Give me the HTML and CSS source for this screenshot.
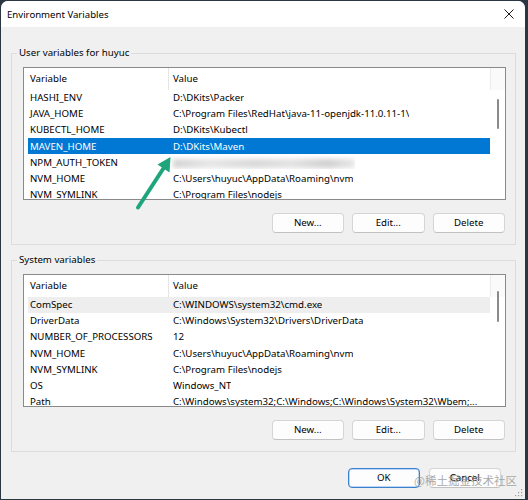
FILE: index.html
```html
<!DOCTYPE html>
<html lang="en">
<head>
<meta charset="utf-8">
<title>Environment Variables</title>
<link rel="stylesheet" href="styles.css">
</head>
<body>
<div class="window">
  <div class="titlebar">
    <span class="title">Environment Variables</span>
    <svg class="close" width="10" height="10" viewBox="0 0 10 10"><path d="M0.5 0.5 L9.5 9.5 M9.5 0.5 L0.5 9.5" stroke="#1a1a1a" stroke-width="1" fill="none"/></svg>
  </div>
  <div class="content">
    <fieldset class="group">
      <legend>User variables for huyuc</legend>
      <div class="list">
        <div class="list-main">
          <div class="head"><span class="c1">Variable</span><span class="c2">Value</span></div>
          <div class="rows">
            <div class="row"><span class="c1">HASHI_ENV</span><span class="c2">D:\DKits\Packer</span></div>
            <div class="row"><span class="c1">JAVA_HOME</span><span class="c2">C:\Program Files\RedHat\java-11-openjdk-11.0.11-1\</span></div>
            <div class="row"><span class="c1">KUBECTL_HOME</span><span class="c2">D:\DKits\Kubectl</span></div>
            <div class="row selected"><span class="c1">MAVEN_HOME</span><span class="c2">D:\DKits\Maven</span></div>
            <div class="row"><span class="c1">NPM_AUTH_TOKEN</span><span class="c2"><span class="blur"></span></span></div>
            <div class="row"><span class="c1">NVM_HOME</span><span class="c2">C:\Users\huyuc\AppData\Roaming\nvm</span></div>
            <div class="row"><span class="c1">NVM_SYMLINK</span><span class="c2">C:\Program Files\nodejs</span></div>
          </div>
        </div>
        <div class="scroll"><div class="scroll-head"></div><div class="thumb user-thumb"></div></div>
      </div>
      <div class="buttons">
        <button class="btn">New...</button>
        <button class="btn">Edit...</button>
        <button class="btn">Delete</button>
      </div>
    </fieldset>

    <fieldset class="group group2">
      <legend>System variables</legend>
      <div class="list">
        <div class="list-main">
          <div class="head"><span class="c1">Variable</span><span class="c2">Value</span></div>
          <div class="rows">
            <div class="row focused"><span class="c1">ComSpec</span><span class="c2">C:\WINDOWS\system32\cmd.exe</span></div>
            <div class="row"><span class="c1">DriverData</span><span class="c2">C:\Windows\System32\Drivers\DriverData</span></div>
            <div class="row"><span class="c1">NUMBER_OF_PROCESSORS</span><span class="c2">12</span></div>
            <div class="row"><span class="c1">NVM_HOME</span><span class="c2">C:\Users\huyuc\AppData\Roaming\nvm</span></div>
            <div class="row"><span class="c1">NVM_SYMLINK</span><span class="c2">C:\Program Files\nodejs</span></div>
            <div class="row"><span class="c1">OS</span><span class="c2">Windows_NT</span></div>
            <div class="row"><span class="c1">Path</span><span class="c2">C:\Windows\system32;C:\Windows;C:\Windows\System32\Wbem;...</span></div>
          </div>
        </div>
        <div class="scroll"><div class="scroll-head"></div><div class="thumb sys-thumb"></div></div>
      </div>
      <div class="buttons">
        <button class="btn">New...</button>
        <button class="btn">Edit...</button>
        <button class="btn">Delete</button>
      </div>
    </fieldset>

    <div class="footer">
      <button class="btn ok">OK</button>
      <button class="btn">Cancel</button>
    </div>
  </div>
  <svg class="grip" width="8" height="8" viewBox="0 0 8 8">
    <rect x="6" y="0" width="1.2" height="1.2" fill="#9a9a9a"/>
    <rect x="3" y="3" width="1.2" height="1.2" fill="#9a9a9a"/>
    <rect x="6" y="3" width="1.2" height="1.2" fill="#9a9a9a"/>
    <rect x="0" y="6" width="1.2" height="1.2" fill="#9a9a9a"/>
    <rect x="3" y="6" width="1.2" height="1.2" fill="#9a9a9a"/>
    <rect x="6" y="6" width="1.2" height="1.2" fill="#9a9a9a"/>
  </svg>
</div>

<svg class="arrow" width="528" height="500" viewBox="0 0 528 500">
  <line x1="138" y1="207.5" x2="164" y2="167.5" stroke="#1fa57c" stroke-width="4" stroke-linecap="round"/>
  <polygon points="170.5,157 157.5,164.5 169.5,172.5" fill="#1fa57c"/>
</svg>

<div class="watermark">@稀土掘金技术社区</div>
</body>
</html>
```

FILE: styles.css
```css
* { box-sizing: border-box; }

html, body {
  margin: 0;
  padding: 0;
}

body {
  width: 528px;
  height: 500px;
  background: #2a3642;
  font-family: "Noto Sans", "Liberation Sans", sans-serif;
  font-size: 9.7px;
  color: #000000;
  overflow: hidden;
}

.window {
  position: relative;
  margin: 1px 3px 0 1px;
  width: 524px;
  height: 498px;
  background: #f0f0f0;
  border-radius: 7px 7px 0 0;
  overflow: hidden;
}

.titlebar {
  height: 26px;
  background: #ffffff;
  display: flex;
  align-items: center;
  justify-content: space-between;
  padding: 0 11px 0 6px;
}

.title {
  font-size: 9.6px;
  color: #000000;
}

.close { display: block; }

.content {
  padding: 18px 9px 0 10px;
}

.group {
  margin: 0;
  min-width: 0;
  min-inline-size: 0;
  padding: 6px 9px 11px 11px;
  border: 1px solid #dcdcdc;
  border-radius: 0;
}

.group2 { margin-top: 7px; }

.group legend {
  margin-left: -6px;
  padding: 0 2px;
  line-height: 16px;
  height: 16px;
  font-size: 9.7px;
  color: #000000;
}

.list {
  display: flex;
  height: 133px;
  border: 1px solid #8a8a8a;
  background: #ffffff;
  overflow: hidden;
}

.list-main {
  flex: 1;
  min-width: 0;
  overflow: hidden;
}

.head {
  display: flex;
  height: 21.5px;
  align-items: center;
}

.head .c1 {
  width: 145px;
  padding-left: 6px;
  border-right: 1px solid #e5e5e5;
  height: 100%;
  display: flex;
  align-items: center;
}

.head .c2 {
  padding-left: 4px;
}

.rows {
  padding-left: 4px;
}

.row {
  display: flex;
  height: 16.2px;
  align-items: center;
  white-space: nowrap;
}

.row .c1 {
  width: 141px;
  flex: none;
  padding-left: 2px;
}

.row .c2 {
  padding-left: 4px;
  min-width: 0;
  overflow: hidden;
}

.row.selected {
  background: #0078d4;
  color: #ffffff;
}

.row.focused {
  background: #eeeeee;
}

.blur {
  display: inline-block;
  width: 182px;
  height: 9px;
  vertical-align: middle;
  background: linear-gradient(90deg, #d2d2d2 0%, #e6e6e6 20%, #d8d8d8 45%, #e2e2e2 65%, #cfcfcf 85%, #e8e8e8 100%);
  filter: blur(2.5px);
}

.scroll {
  width: 15px;
  flex: none;
  display: flex;
  flex-direction: column;
  align-items: center;
}

.scroll-head {
  width: 100%;
  height: 21.5px;
  border-left: 1px solid #ececec;
  background: #fafafa;
}

.thumb {
  width: 2px;
  background: #8a8a8a;
  border-radius: 1px;
  margin-left: 1px;
}

.user-thumb { margin-top: 9px; height: 30px; }
.sys-thumb { margin-top: -6px; height: 31px; }

.buttons {
  display: flex;
  justify-content: flex-end;
  gap: 8px;
  margin-top: 13px;
  padding-right: 1px;
}

.btn {
  width: 72.5px;
  height: 20px;
  padding: 0;
  margin: 0;
  font-family: inherit;
  font-size: 9.7px;
  color: #000000;
  background: #fdfdfd;
  border: 1px solid #d5d5d5;
  border-bottom-color: #c2c2c2;
  border-radius: 4px;
  line-height: 18px;
}

.footer {
  display: flex;
  justify-content: flex-end;
  gap: 8.5px;
  margin-top: 16px;
  padding-right: 15px;
}

.btn.ok {
  border: 1px solid #3b7fcf;
  box-shadow: inset 0 0 0 0.5px #7fb0e6;
}

.grip {
  position: absolute;
  right: 2px;
  bottom: 2px;
}

.arrow {
  position: absolute;
  left: 0;
  top: 0;
  pointer-events: none;
}

.watermark {
  position: absolute;
  left: 414px;
  top: 472px;
  font-family: "Noto Sans CJK SC", sans-serif;
  font-size: 11.5px;
  line-height: 16px;
  color: rgba(140, 140, 140, 0.75);
  white-space: nowrap;
}
```
